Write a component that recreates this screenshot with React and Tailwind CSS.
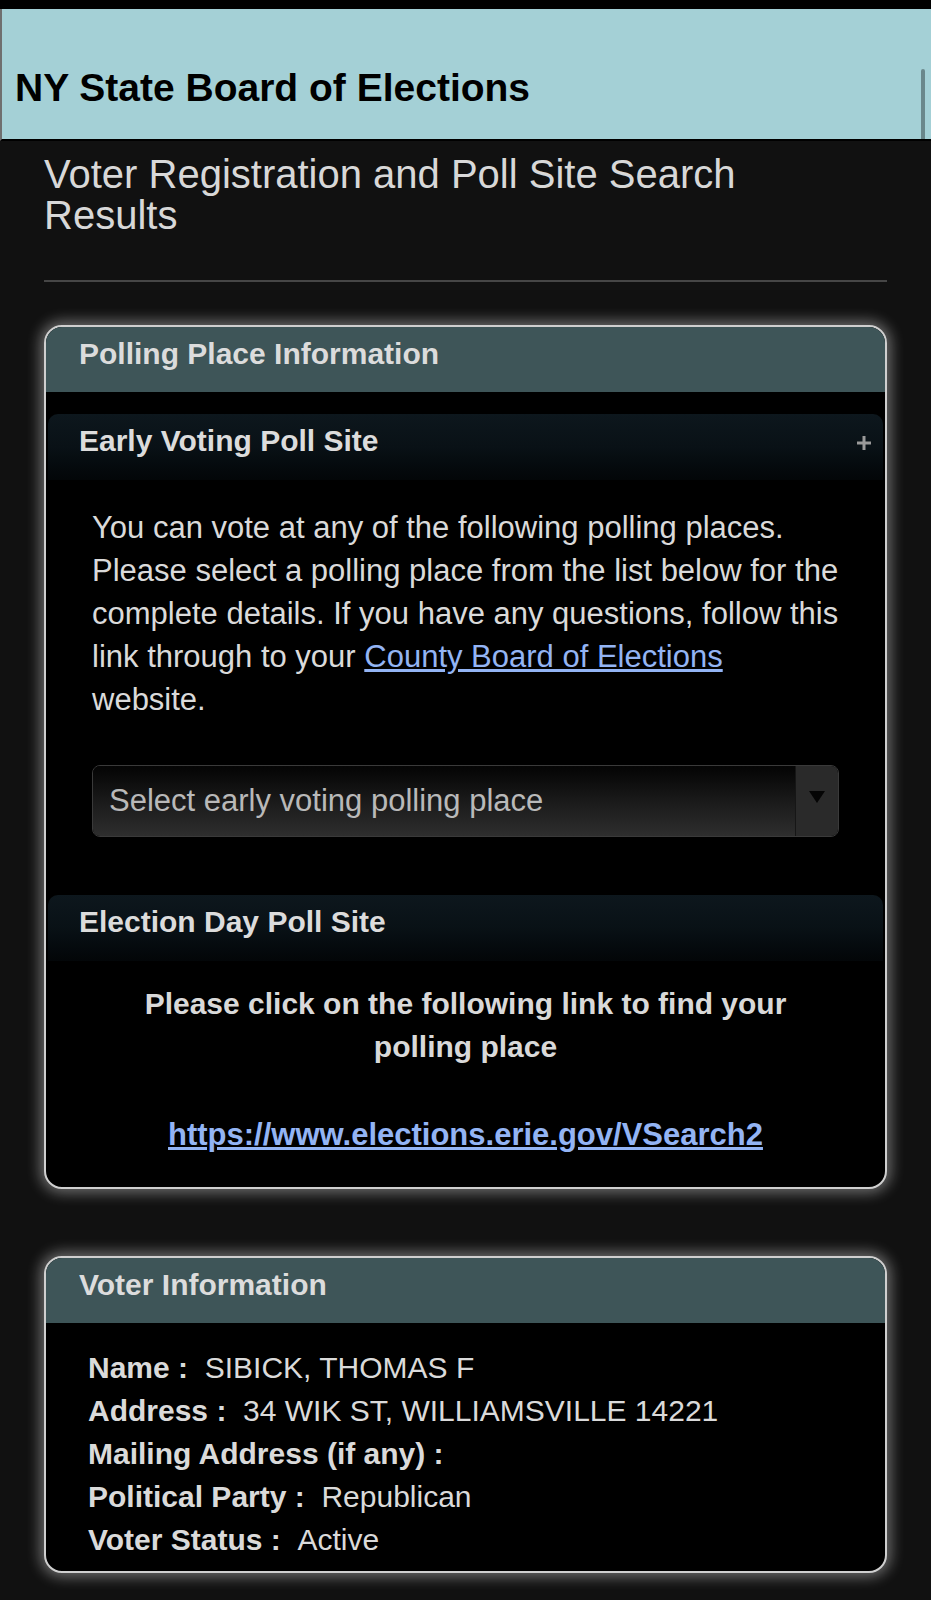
import React from "react";

function SectionBar({ title, plus = false }) {
  return (
    <div className="mx-[2px] h-[66px] rounded-t-[10px] bg-gradient-to-b from-[#0d171d] via-[#091116] to-[#030608] pl-[31px] pr-[11px] pt-[9px] flex justify-between items-start">
      <div className="text-[30px] leading-[36px] font-bold text-[#dcdcdc]">{title}</div>
      {plus && (
        <svg width="16" height="16" viewBox="0 0 16 16" className="mt-[12px]">
          <path d="M8 1v14M1 8h14" stroke="#9a9a9a" strokeWidth="3" />
        </svg>
      )}
    </div>
  );
}

function Card({ title, children, className = "" }) {
  return (
    <div
      className={`rounded-[18px] border-2 border-[#cfcfcf] bg-black overflow-hidden shadow-[0_0_14px_4px_rgba(255,255,255,0.38)] ${className}`}
    >
      <div className="h-[65px] bg-[#3e5558] pl-[33px] pt-[9px] text-[30px] leading-[36px] font-bold text-[#dcdcdc]">
        {title}
      </div>
      {children}
    </div>
  );
}

const VOTER = [
  ["Name :", "SIBICK, THOMAS F"],
  ["Address :", "34 WIK ST, WILLIAMSVILLE 14221"],
  ["Mailing Address (if any) :", ""],
  ["Political Party :", "Republican"],
  ["Voter Status :", "Active"],
];

export default function App() {
  return (
    <div className="relative min-h-[1600px] bg-[#111111] font-['Liberation_Sans',Arial,sans-serif]">
      <div className="h-[9px] bg-black" />
      <header className="h-[132px] bg-[#a4d0d6] border-l-2 border-l-[#6f6f6f] border-b-2 border-b-black pl-[13px] pt-[59px]">
        <h1 className="text-[39px] leading-[39px] font-bold text-black">NY State Board of Elections</h1>
      </header>

      {/* scroll indicator */}
      <div className="absolute left-[921px] top-[69px] w-[4px] h-[70px] rounded-t-full bg-[rgba(0,0,0,0.35)]" />

      <main className="px-[44px] pb-[27px]">
        <h2 className="mt-[13px] max-w-[740px] text-[40px] leading-[41px] text-[#d8d8d8]">
          Voter Registration and Poll Site Search Results
        </h2>
        <div className="mt-[44px] h-[2px] bg-[#464646]" />

        <Card title="Polling Place Information" className="mt-[43px]">
          <div className="pt-[22px]">
            <SectionBar title="Early Voting Poll Site" plus />
            <div className="px-[46px]">
              <p className="mt-[26px] text-[31px] leading-[43px] text-[#dadada]">
                You can vote at any of the following polling places. Please select a polling place from the list
                below for the complete details. If you have any questions, follow this link through to your{" "}
                <a href="#" className="text-[#93b4f4] underline">
                  County Board of Elections
                </a>{" "}
                website.
              </p>
              <div className="mt-[44px] h-[72px] rounded-[8px] border border-[#3a3a3a] flex overflow-hidden">
                <div className="flex-1 flex items-center pl-[16px] bg-gradient-to-b from-[#050505] via-[#1a1a1a] to-[#2e2e2e]">
                  <span className="text-[31px] leading-[36px] text-[#b9b9b9]">Select early voting polling place</span>
                </div>
                <div className="w-[43px] bg-[#2a2a2a] border-l border-[#161616] flex justify-center pt-[25px]">
                  <svg width="16" height="12" viewBox="0 0 16 12">
                    <polygon points="0,0 16,0 8,12" fill="#050505" />
                  </svg>
                </div>
              </div>
            </div>

            <div className="mt-[58px]">
              <SectionBar title="Election Day Poll Site" />
            </div>
            <div className="px-[46px] pb-[31px] text-center font-bold text-[30px] leading-[43px]">
              <p className="mt-[21px] text-[#d9d9d9]">Please click on the following link to find your polling place</p>
              <a href="#" className="mt-[45px] block text-[31px] text-[#93b4f4] underline">
                https://www.elections.erie.gov/VSearch2
              </a>
            </div>
          </div>
        </Card>

        <Card title="Voter Information" className="mt-[67px]">
          <div className="pt-[23px] pb-[10px] pl-[42px] text-[30px] leading-[43px] text-[#dadada]">
            {VOTER.map(([label, value]) => (
              <div key={label} className="whitespace-nowrap">
                <span className="font-bold">{label}</span>
                {value ? `\u00a0\u00a0${value}` : ""}
              </div>
            ))}
          </div>
        </Card>
      </main>
    </div>
  );
}
